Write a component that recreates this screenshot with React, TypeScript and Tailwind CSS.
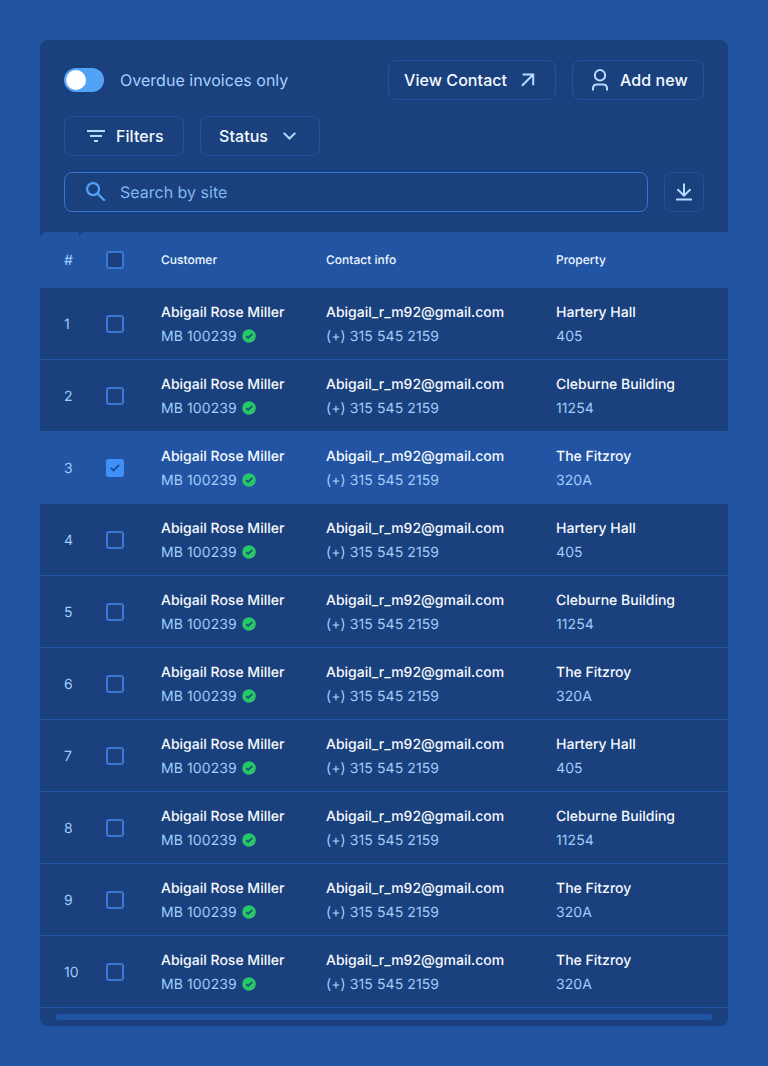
import React from "react";

const properties: [string, string][] = [
  ["Hartery Hall", "405"],
  ["Cleburne Building", "11254"],
  ["The Fitzroy", "320A"],
  ["Hartery Hall", "405"],
  ["Cleburne Building", "11254"],
  ["The Fitzroy", "320A"],
  ["Hartery Hall", "405"],
  ["Cleburne Building", "11254"],
  ["The Fitzroy", "320A"],
  ["The Fitzroy", "320A"],
];

const columns = "grid grid-cols-[66px_55px_165px_230px_1fr] items-center";

function Toolbar() {
  const button =
    "flex h-10 items-center rounded-lg border border-[#2451a1] text-base font-[470] tracking-[0.06px] text-[#f4faff]";
  return (
    <div className="flex h-48 flex-col gap-4 px-6 pt-5">
      <div className="flex h-10 items-center">
        <div className="flex h-6 w-10 items-center rounded-full bg-[#52a3f8] pl-0.5">
          <div className="size-5 rounded-full bg-white" />
        </div>
        <span className="ml-4 flex-1 text-base tracking-[0.03px] text-[#a6d2ff]">Overdue invoices only</span>
        <button className={`${button} w-[168px] justify-between pr-[20px] pl-[15px]`}>
          View Contact
          <svg width="14" height="14" viewBox="0 0 14 14" fill="none" stroke="#b5dcff" strokeWidth="2">
            <path d="M1.6 1.5H12.2V12.3M12.2 1.5L1 12.7" />
          </svg>
        </button>
        <button className={`${button} ml-4 w-[132px] pl-[19px]`}>
          <svg width="16" height="22" viewBox="0 0 16 22" fill="none" stroke="#b5dcff" strokeWidth="2">
            <circle cx="8" cy="6.3" r="5.2" />
            <path d="M1 21.5V19.5Q1 15.5 5 15.5H11Q15 15.5 15 19.5V21.5" />
          </svg>
          <span className="ml-3">Add new</span>
        </button>
      </div>
      <div className="flex gap-4">
        <button className={`${button} w-[120px] pl-[22px]`}>
          <svg width="18" height="12" viewBox="0 0 18 12" fill="#b5dcff">
            <path d="M0 0H18V2H0zM3 5H15V7H3zM7 10H11V12H7z" />
          </svg>
          <span className="ml-[11px]">Filters</span>
        </button>
        <button className={`${button} w-[120px] justify-between pr-[23.5px] pl-[18px]`}>
          Status
          <svg width="13" height="8" viewBox="0 0 13 8" fill="none" stroke="#b5dcff" strokeWidth="2">
            <path d="M.7 .9L6.5 6.5L12.3 .9" />
          </svg>
        </button>
      </div>
      <div className="flex gap-4">
        <div className="flex h-10 flex-1 items-center rounded-lg border border-[#3777d2] pl-[21px]">
          <svg width="20" height="20" viewBox="0 0 20 20" fill="none" stroke="#509ff4" strokeWidth="2.3">
            <circle cx="7.1" cy="7.1" r="6" />
            <path d="M11.4 11.4L18.8 18.8" />
          </svg>
          <span className="ml-[14px] text-base text-[#82b7f4]">Search by site</span>
        </div>
        <button className="flex size-10 items-center justify-center rounded-lg border border-[#244e98]">
          <svg width="16" height="18" viewBox="0 0 16 18" fill="none" stroke="#b5dcff" strokeWidth="2">
            <path d="M8 .5V12.5M1.5 6.3L8 12.7L14.5 6.3M0 16.5H16" />
          </svg>
        </button>
      </div>
    </div>
  );
}

function HeaderCorner() {
  return (
    <svg className="block" width="7" height="5" viewBox="0 0 7 5" fill="#1a407d">
      <path d="M0 0H7Q2.5 0 0 5z" />
    </svg>
  );
}

function Header() {
  return (
    <div className="relative h-14 bg-[#2254a4]">
      <div className="absolute top-0 left-0"><HeaderCorner /></div>
      <div className="absolute top-0 left-[39px]"><HeaderCorner /></div>
      <div className={`${columns} h-full text-xs font-medium text-[#eff8ff]`}>
        <span className="pt-0.5 pl-6 text-sm font-normal text-[#a6d2ff]">#</span>
        <span className="size-[18px] rounded-[3px] border-2 border-[#3b78d4] bg-[#1a407d]" />
        <span>Customer</span>
        <span>Contact info</span>
        <span>Property</span>
      </div>
    </div>
  );
}

function Row({ index, name, unit }: { index: number; name: string; unit: string }) {
  const selected = index === 3;
  return (
    <div
      className={`${columns} h-18 border-b border-[#2354a4] text-sm leading-6 font-[470] text-[#f7fbff] ${selected ? "bg-[#2354a4]" : ""}`}
    >
      <span className="pt-0.5 pl-6 font-normal text-[#a0cdfb]">{index}</span>
      {selected ? (
        <span className="mt-px flex size-[18px] items-center justify-center rounded-[3px] bg-[#4090fa]">
          <svg width="10" height="8" viewBox="0 0 10 8" fill="none" stroke="#1d4b91" strokeWidth="1.8">
            <path d="M.8 3.8L3.6 6.5L9.2 .9" />
          </svg>
        </span>
      ) : (
        <span className="mt-px size-[18px] rounded-[3px] border-2 border-[#3b78d4]" />
      )}
      <div className="pt-[3px]">
        <div>Abigail Rose Miller</div>
        <div className="flex items-center font-normal tracking-[0.09px] text-[#a0cdfb]">
          <span className="w-[81px]">MB 100239</span>
          <svg className="mb-0.5" width="14" height="14" viewBox="0 0 14 14">
            <circle cx="7" cy="7" r="6.8" fill="#25c768" />
            <path d="M4 7L6.2 9L10.2 5" fill="none" stroke="#184275" strokeWidth="1.6" />
          </svg>
        </div>
      </div>
      <div className="pt-[3px]">
        <div>Abigail_r_m92@gmail.com</div>
        <div className="font-normal tracking-[0.09px] text-[#a0cdfb]">(+) 315 545 2159</div>
      </div>
      <div className="pt-[3px]">
        <div>{name}</div>
        <div className="font-normal tracking-[0.09px] text-[#a0cdfb]">{unit}</div>
      </div>
    </div>
  );
}

export default function App() {
  return (
    <main className="h-[1066px] w-[768px] bg-[#2254a4] p-10 font-['Inter',sans-serif] [text-rendering:geometricPrecision]">
      <section className="h-[986px] overflow-hidden rounded-lg bg-[#1a407d]">
        <Toolbar />
        <Header />
        {properties.map(([name, unit], i) => (
          <Row key={i} index={i + 1} name={name} unit={unit} />
        ))}
        <div className="mx-4 mt-1.5 h-1.5 rounded-full bg-[#2254a4]" />
      </section>
    </main>
  );
}
